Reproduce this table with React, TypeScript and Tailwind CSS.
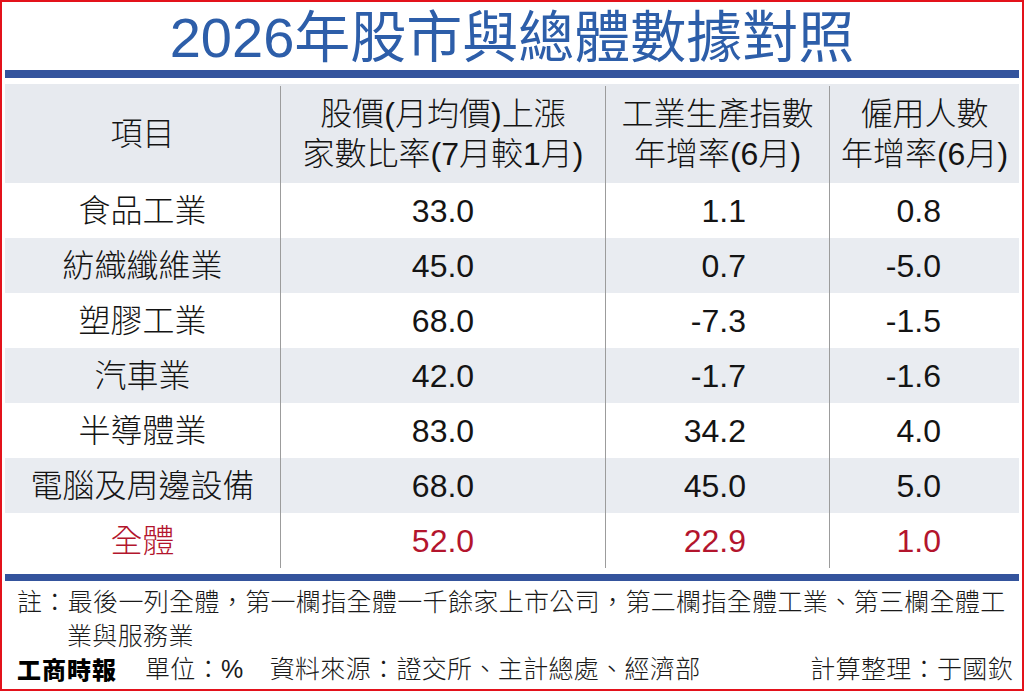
import React from "react";

const rows: { name: string; a: string; b: string; c: string; red?: boolean }[] = [
  { name: "食品工業", a: "33.0", b: "1.1", c: "0.8" },
  { name: "紡織纖維業", a: "45.0", b: "0.7", c: "-5.0" },
  { name: "塑膠工業", a: "68.0", b: "-7.3", c: "-1.5" },
  { name: "汽車業", a: "42.0", b: "-1.7", c: "-1.6" },
  { name: "半導體業", a: "83.0", b: "34.2", c: "4.0" },
  { name: "電腦及周邊設備", a: "68.0", b: "45.0", c: "5.0" },
  { name: "全體", a: "52.0", b: "22.9", c: "1.0", red: true },
];

export default function App() {
  return (
    <div className="w-[1024px] h-[691px] border-2 border-[#e3121b] bg-white overflow-hidden px-[3px] font-['Liberation_Sans','Noto_Sans_CJK_TC',sans-serif] font-light text-[#141414]">
      <div className="h-[68px] flex items-center justify-center text-[56px] leading-none text-[#2d5ea9] pt-[3px] font-normal">
        2026年股市與總體數據對照
      </div>
      <div className="h-[8px] bg-[#34549d]" />
      <div className="h-[6px]" />
      <div className="grid grid-cols-[275px_325px_224px_1fr] h-[99px] bg-[#e7eaef] text-[32px] leading-[40px]">
        <div className="flex items-center justify-center">項目</div>
        <div className="flex flex-col items-center justify-center border-l-[1.5px] border-[#9c9c9c] mt-[2px]">
          <span className="-mt-[2px]">股價(月均價)上漲</span>
          <span>家數比率(7月較1月)</span>
        </div>
        <div className="flex flex-col items-center justify-center border-l-[1.5px] border-[#9c9c9c] mt-[2px]">
          <span className="-mt-[2px]">工業生產指數</span>
          <span>年增率(6月)</span>
        </div>
        <div className="flex flex-col items-center justify-center border-l-[1.5px] border-[#9c9c9c] mt-[2px]">
          <span className="-mt-[2px]">僱用人數</span>
          <span>年增率(6月)</span>
        </div>
      </div>
      {rows.map((r, i) => (
        <div
          key={r.name}
          className={`grid grid-cols-[275px_325px_224px_1fr] h-[55px] text-[32px] leading-none ${
            i % 2 === 1 ? "bg-[#e9ecf1]" : "bg-white"
          } ${r.red ? "text-[#b3152d]" : ""}`}
        >
          <div className="flex items-center justify-center">{r.name}</div>
          <div className="flex items-center justify-center border-l-[1.5px] border-[#9c9c9c]">{r.a}</div>
          <div className="flex items-center justify-end pr-[83px] border-l-[1.5px] border-[#9c9c9c]">{r.b}</div>
          <div className="flex items-center justify-end pr-[78px] border-l-[1.5px] border-[#9c9c9c]">{r.c}</div>
        </div>
      ))}
      <div className="h-[6px]" />
      <div className="h-[7px] bg-[#34549d]" />
      <div className="pl-[12px] pr-[6px] pt-[4px] text-[25px] tracking-[0.35px] leading-[34px] text-[#1a1a1a] whitespace-nowrap">
        <div>註：最後一列全體，第一欄指全體一千餘家上市公司，第二欄指全體工業、第三欄全體工</div>
        <div className="pl-[50px]">業與服務業</div>
        <div className="flex items-center justify-between -mt-[1px]">
          <div className="flex items-center">
            <span className="font-black text-[24px] tracking-[1px] text-black mr-[28px] font-['Noto_Sans_CJK_TC',serif]">工商時報</span>
            <span className="mr-[26px]">單位：%</span>
            <span>資料來源：證交所、主計總處、經濟部</span>
          </div>
          <span>計算整理：于國欽</span>
        </div>
      </div>
    </div>
  );
}
